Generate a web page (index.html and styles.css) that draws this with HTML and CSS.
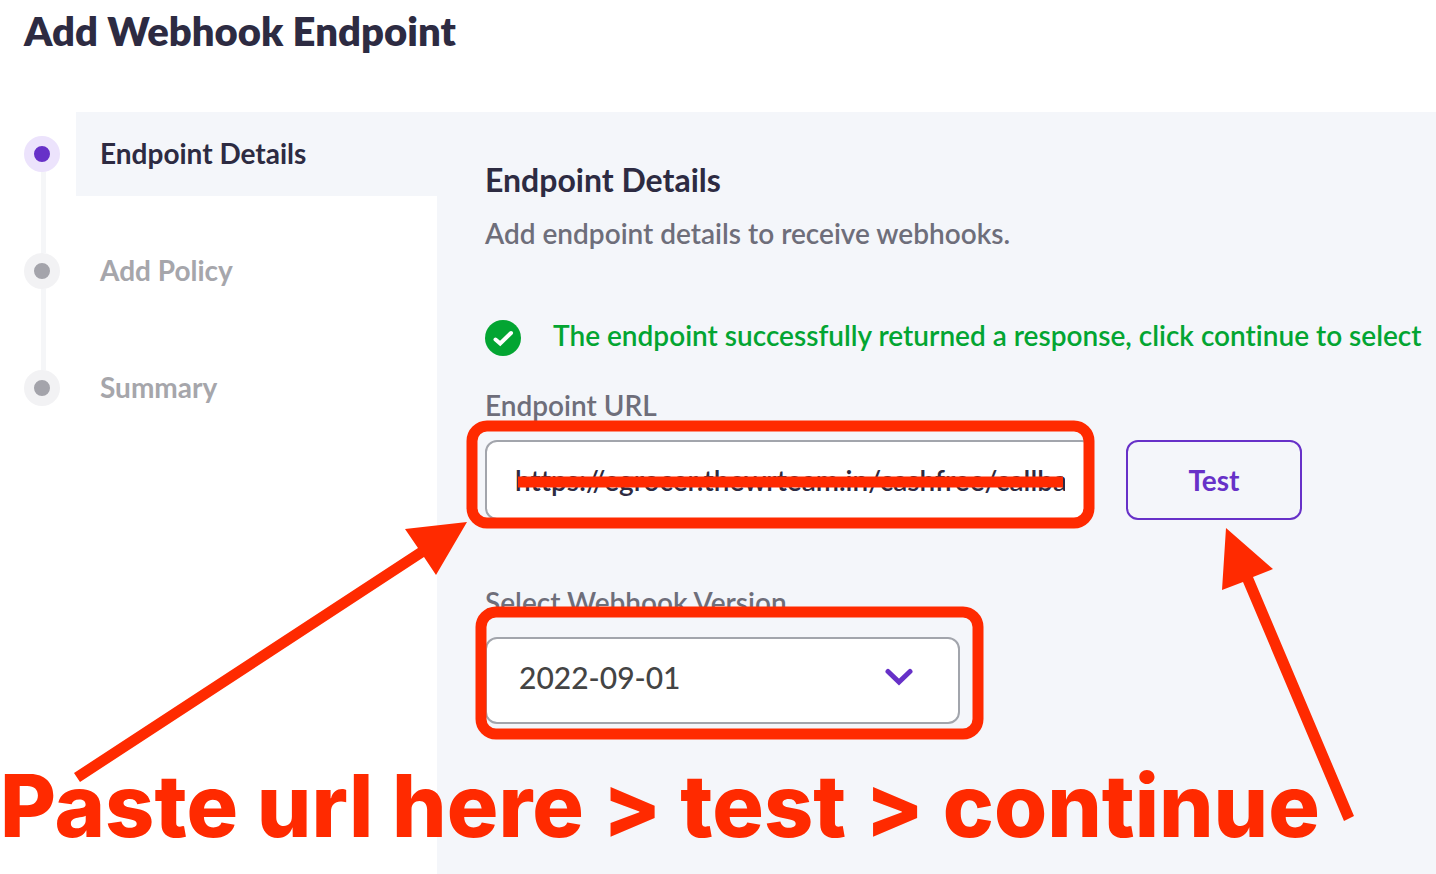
FILE: index.html
```html
<!DOCTYPE html>
<html lang="en">
<head>
<meta charset="utf-8">
<title>Add Webhook Endpoint</title>
<link rel="stylesheet" href="styles.css">
</head>
<body>
<div class="page">
  <header class="page-header">
    <h1 class="page-title">Add Webhook Endpoint</h1>
  </header>
  <div class="wizard">
    <nav class="steps-nav" aria-label="Progress">
      <ol class="steps">
        <li class="step step-active" aria-current="step">
          <span class="step-marker"></span>
          <span class="step-label">Endpoint Details</span>
        </li>
        <li class="step">
          <span class="step-marker"></span>
          <span class="step-label">Add Policy</span>
        </li>
        <li class="step">
          <span class="step-marker"></span>
          <span class="step-label">Summary</span>
        </li>
      </ol>
    </nav>
    <main class="panel">
      <h2 class="panel-title">Endpoint Details</h2>
      <p class="panel-text">Add endpoint details to receive webhooks.</p>
      <div class="notice" role="status">
        <svg class="notice-icon" viewBox="0 0 36 36" aria-hidden="true">
          <circle cx="18" cy="18" r="18" fill="#03a532"/>
          <path d="M10.500 19.500 15.200 23.500 26 13" fill="none" stroke="#fff" stroke-width="4" stroke-linecap="round" stroke-linejoin="miter"/>
        </svg>
        <p class="notice-text">The endpoint successfully returned a response, click continue to select</p>
      </div>
      <form class="form">
        <label class="field-label" for="url">Endpoint URL</label>
        <div class="url-row">
          <input class="url-input" id="url" type="text" value="https://egrocer.thewrteam.in/cashfree/callba">
          <button class="test-button" type="button">Test</button>
        </div>
        <label class="field-label version-label" for="version">Select Webhook Version</label>
        <div class="select-wrap">
          <select class="version-select" id="version">
            <option>2022-09-01</option>
          </select>
          <svg class="chevron" viewBox="0 0 28 18" aria-hidden="true">
            <path d="M3 3.500 14 14 25 3.500" fill="none" stroke="#6731c8" stroke-width="5" stroke-linecap="round"/>
          </svg>
        </div>
      </form>
    </main>
  </div>
  <div class="markup">
    <svg class="markup-shapes" width="1436" height="874" viewBox="0 0 1436 874" aria-hidden="true">
      <g fill="none" stroke="#ff2a00" stroke-width="11">
        <rect x="472" y="426" width="617" height="97" rx="15"/>
        <rect x="481" y="612" width="497" height="122" rx="15"/>
        <path d="M518 482H1063"/>
      </g>
      <g fill="#ff2a00">
        <path d="M74 773 418 548 405 529 467 522 436 575 424 557 80 782Z"/>
        <path d="M1226 528 1273 569 1253 577 1354 816 1344 821 1243 582 1222 590Z"/>
      </g>
    </svg>
    <p class="caption">Paste url here &gt; test &gt; continue</p>
  </div>
</div>
</body>
</html>
```
FILE: styles.css
```css
* {
  box-sizing: border-box;
}

body {
  margin: 0;
  background: #fff;
  color: #2d2b42;
  font-family: Lato, "Open Sans", sans-serif;
  font-size: 28px;
  font-variant-ligatures: none;
  line-height: 32px;
}

h1, h2, p, ol {
  margin: 0;
  padding: 0;
}

.page {
  position: relative;
  display: flex;
  flex-direction: column;
  min-height: 100vh;
  overflow: hidden;
}

.page-header {
  padding: 7px 24px 57px;
}

.page-title {
  font-size: 40px;
  font-weight: 800;
  line-height: 48px;
}

.wizard {
  display: flex;
  flex: 1;
}

.steps-nav {
  flex: 0 0 437px;
}

.steps {
  display: flex;
  flex-direction: column;
  gap: 33px;
  list-style: none;
}

.step {
  position: relative;
  display: flex;
  gap: 16px;
  padding-left: 24px;
  color: #a6a6ab;
  font-weight: 700;
}

.step:not(:last-child)::before {
  content: "";
  position: absolute;
  top: 60px;
  left: 41px;
  width: 5px;
  height: 81px;
  background: #f5f6f8;
}

.step-marker {
  flex: none;
  width: 36px;
  height: 36px;
  margin-top: 24px;
  border: 10px solid #f2f2f4;
  border-radius: 50%;
  background: #a4a4ab;
}

.step-label {
  flex: 1;
  padding: 25px 24px 27px;
}

.step-active {
  color: #2d2b42;
}

.step-active .step-marker {
  border-color: #ece3fc;
  background: #6731c8;
}

.step-active .step-label {
  background: #f4f6fa;
}

.panel {
  flex: 1;
  min-width: 0;
  padding: 50px 0 48px 48px;
  background: #f4f6fa;
}

.panel-title {
  font-size: 32px;
  font-weight: 700;
  line-height: 36px;
}

.panel-text {
  margin-top: 19px;
  color: #6e6e7a;
  font-weight: 600;
}

.notice {
  display: flex;
  align-items: flex-end;
  gap: 32px;
  margin-top: 70px;
  color: #03a532;
  font-weight: 600;
}

.notice-icon {
  flex: none;
  width: 36px;
  height: 36px;
}

.notice-text {
  padding-bottom: 5px;
  white-space: nowrap;
}

.form {
  margin-top: 33px;
}

.field-label {
  display: block;
  color: #6e6e7a;
  font-weight: 600;
}

.url-row {
  display: flex;
  gap: 32px;
  margin-top: 19px;
}

.url-input {
  flex: 0 1 609px;
  min-width: 0;
  height: 80px;
  padding: 0 27px 0 28px;
  border: 2px solid #a2a5ac;
  border-radius: 12px;
  background: #fff;
  color: #2d2b42;
  font: inherit;
  font-weight: 600;
}

.test-button {
  width: 176px;
  height: 80px;
  border: 2px solid #6731c8;
  border-radius: 12px;
  background: transparent;
  color: #6731c8;
  font: inherit;
  font-weight: 700;
}

.version-label {
  margin-top: 66px;
}

.select-wrap {
  position: relative;
  max-width: 475px;
  margin-top: 19px;
}

.version-select {
  display: block;
  width: 100%;
  height: 87px;
  padding: 0 80px 8px 32px;
  border: 2px solid #a2a5ac;
  border-radius: 12px;
  appearance: none;
  background: #fff;
  color: #444;
  font: inherit;
  font-size: 30px;
  font-weight: 500;
}

.chevron {
  position: absolute;
  top: 31px;
  right: 47px;
  width: 28px;
  height: 18px;
  pointer-events: none;
}

.markup {
  position: absolute;
  inset: 0;
  pointer-events: none;
}

.markup-shapes {
  display: block;
}

.caption {
  position: absolute;
  top: 756px;
  left: 0;
  color: #ff2a00;
  font-family: Inter, "Open Sans", sans-serif;
  font-size: 86px;
  font-weight: 800;
  line-height: 100px;
  white-space: nowrap;
}
```
